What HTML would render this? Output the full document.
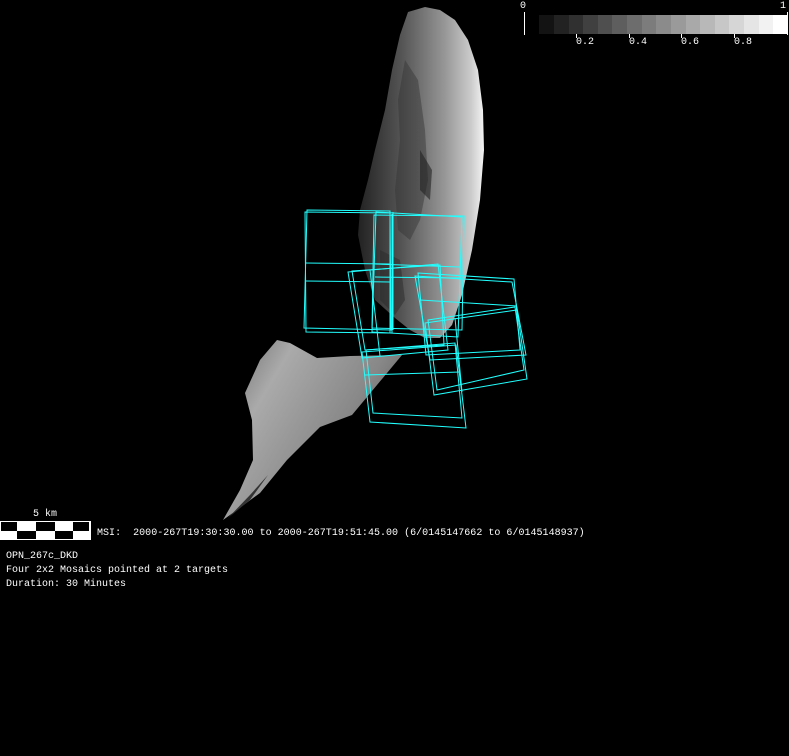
<!DOCTYPE html>
<html><head><style>
body{margin:0;background:#000;width:789px;height:756px;overflow:hidden;position:relative;font-family:"Liberation Mono",monospace;color:#fff;font-size:10px}
.t{position:absolute;white-space:pre;line-height:14px}
</style></head><body>
<svg width="789" height="756" style="position:absolute;left:0;top:0">
<defs>
<linearGradient id="g1" x1="0" y1="0" x2="1" y2="0"><stop offset="0" stop-color="#222"/><stop offset="0.35" stop-color="#555"/><stop offset="0.7" stop-color="#999"/><stop offset="0.9" stop-color="#ccc"/><stop offset="1" stop-color="#f4f4f4"/></linearGradient>
<linearGradient id="g2" x1="0" y1="0" x2="1" y2="0.6"><stop offset="0" stop-color="#666"/><stop offset="0.3" stop-color="#aaa"/><stop offset="0.7" stop-color="#888"/><stop offset="1" stop-color="#555"/></linearGradient>
</defs>
<path d="M408 12 L425 7 L440 10 L455 20 L468 40 L478 70 L483 110 L484 150 L480 200 L472 250 L462 295 L452 325 L440 338 L425 338 L410 330 L395 318 L375 300 L365 270 L358 235 L360 210 L368 180 L375 150 L385 110 L392 70 L400 35 Z" fill="url(#g1)"/>
<path d="M405 60 L418 80 L425 130 L428 180 L420 220 L410 240 L398 230 L395 190 L400 140 L398 100 Z" fill="#333" opacity="0.45"/>
<path d="M420 150 L432 170 L430 200 L420 190 Z" fill="#222" opacity="0.6"/>
<path d="M380 250 L400 260 L405 300 L395 315 L380 300 Z" fill="#2a2a2a" opacity="0.5"/>
<path d="M223 520 L240 490 L253 460 L252 420 L245 393 L260 360 L277 340 L290 343 L317 358 L350 356 L402 355 L367 397 L352 415 L320 427 L287 460 L260 493 L230 515 Z" fill="url(#g2)"/>
<path d="M228 518 L250 495 L268 475 L250 500 Z" fill="#333"/>
<g fill="none" stroke="#2ff" stroke-width="1">
<path d="M305 212 L390 213 L390 333 L306 332 Z"/><path d="M307 210 L390 211 L391 330 L304 328 Z"/>
<path d="M305 263 L390 264"/><path d="M306 281 L390 282"/>
<path d="M376 212 L462 217 L458 337 L372 332 Z"/><path d="M374 215 L464 216 L462 330 L372 328 Z"/>
<path d="M375 264 L460 267"/><path d="M375 277 L461 278"/><path d="M392 214 L392 333"/><path d="M393 212 L393 330"/>
<path d="M348 272 L438 264 L448 350 L362 358 Z"/><path d="M352 271 L440 265 L444 345 L365 350 Z"/><path d="M370 270 L380 356"/>
<path d="M415 276 L512 282 L526 355 L430 360 Z"/><path d="M418 273 L514 279 L520 350 L426 355 Z"/><path d="M420 300 L517 306"/>
<path d="M425 323 L517 310 L527 379 L434 395 Z"/><path d="M428 320 L515 307 L524 370 L437 390 Z"/><path d="M455 318 L462 392"/>
<path d="M362 352 L456 345 L466 428 L370 422 Z"/><path d="M366 350 L455 343 L462 418 L373 413 Z"/><path d="M365 375 L460 372"/>
</g>
<g>
<rect x="539" y="15" width="15" height="19" fill="#131313"/><rect x="554" y="15" width="15" height="19" fill="#222"/><rect x="569" y="15" width="15" height="19" fill="#303030"/><rect x="583" y="15" width="15" height="19" fill="#404040"/><rect x="598" y="15" width="15" height="19" fill="#4f4f4f"/><rect x="612" y="15" width="15" height="19" fill="#5e5e5e"/><rect x="627" y="15" width="15" height="19" fill="#6d6d6d"/><rect x="642" y="15" width="15" height="19" fill="#7c7c7c"/><rect x="656" y="15" width="15" height="19" fill="#8b8b8b"/><rect x="671" y="15" width="15" height="19" fill="#9a9a9a"/><rect x="686" y="15" width="15" height="19" fill="#a9a9a9"/><rect x="700" y="15" width="15" height="19" fill="#b8b8b8"/><rect x="715" y="15" width="15" height="19" fill="#c7c7c7"/><rect x="729" y="15" width="15" height="19" fill="#d6d6d6"/><rect x="744" y="15" width="15" height="19" fill="#e5e5e5"/><rect x="759" y="15" width="15" height="19" fill="#f2f2f2"/><rect x="773" y="15" width="15" height="19" fill="#fff"/>
</g>
<g stroke="#fff"><line x1="524.5" y1="12" x2="524.5" y2="35"/><line x1="787.5" y1="12" x2="787.5" y2="35"/><line x1="576.5" y1="34" x2="576.5" y2="38"/><line x1="629.5" y1="34" x2="629.5" y2="38"/><line x1="681.5" y1="34" x2="681.5" y2="38"/><line x1="734.5" y1="34" x2="734.5" y2="38"/></g>
<rect x="0" y="521" width="91" height="19" fill="#fff"/>
<g fill="#000"><rect x="1" y="522" width="16" height="9"/><rect x="36" y="522" width="19" height="9"/><rect x="73" y="522" width="16" height="9"/><rect x="17" y="531" width="19" height="8"/><rect x="55" y="531" width="18" height="8"/></g>
</svg>
<div class="t" style="left:520px;top:0px">0</div>
<div class="t" style="left:780px;top:0px">1</div>
<div class="t" style="left:576px;top:36px">0.2</div>
<div class="t" style="left:629px;top:36px">0.4</div>
<div class="t" style="left:681px;top:36px">0.6</div>
<div class="t" style="left:734px;top:36px">0.8</div>
<div class="t" style="left:33px;top:508px">5 km</div>
<div class="t" style="left:97px;top:527px;font-size:10px;letter-spacing:0.02px">MSI:  2000-267T19:30:30.00 to 2000-267T19:51:45.00 (6/0145147662 to 6/0145148937)</div>
<div class="t" style="left:6px;top:550px">OPN_267c_DKD<br>Four 2x2 Mosaics pointed at 2 targets<br>Duration: 30 Minutes</div>
</body></html>
